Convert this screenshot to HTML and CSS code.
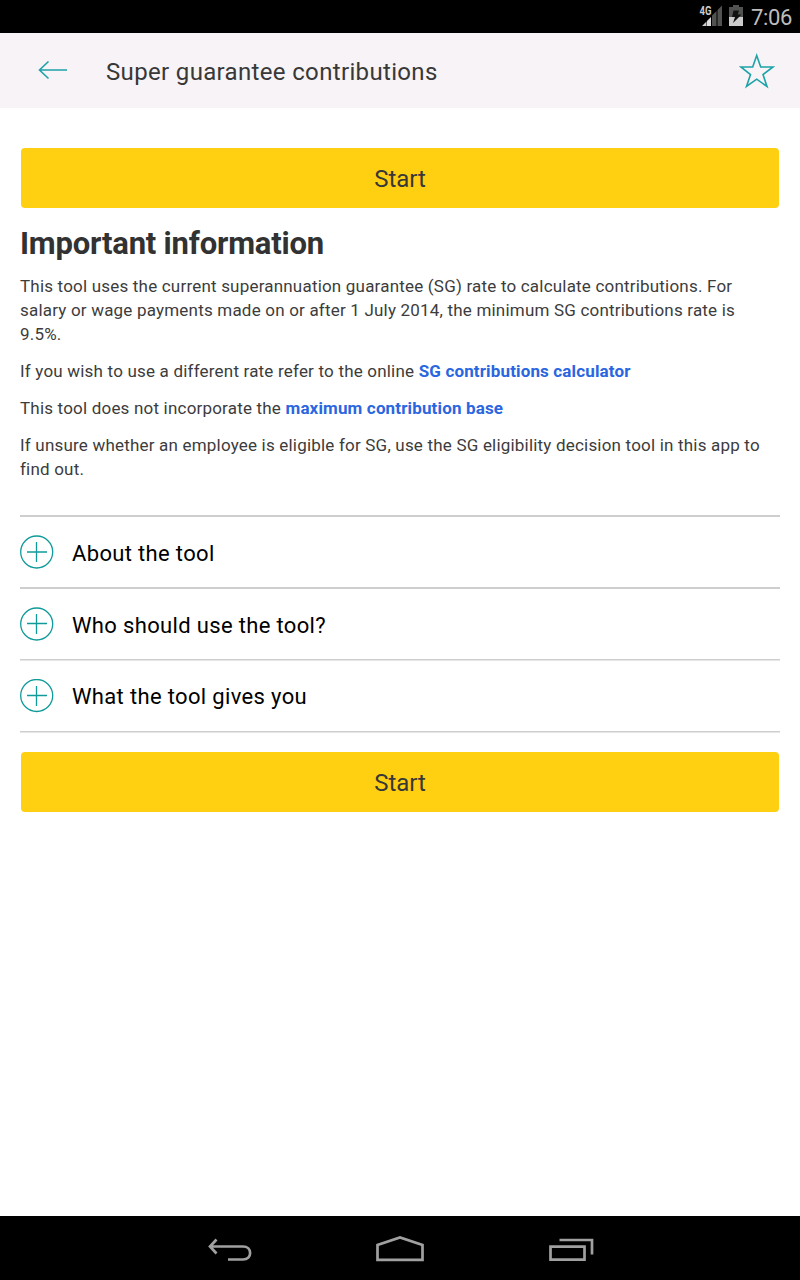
FILE: index.html
```html
<!DOCTYPE html>
<html lang="en">
<head>
<meta charset="utf-8">
<title>Super guarantee contributions</title>
<link rel="stylesheet" href="styles.css">
</head>
<body>
<div class="screen">
  <div class="status">
    <svg class="status-icons" width="50" height="33" viewBox="696 0 50 33">
      <path d="M702 26l4.500-4.500v4.500z" fill="#ccc"/><path d="M707 21l4-4v9h-4z" fill="#ddd"/>
      <path d="M712 15.500l4.500-4.500v15h-4.500zM717.500 10l4.500-4.500v20.500h-4.500z" fill="#505350"/>
      <text class="network" x="699.500" y="15" textLength="12" lengthAdjust="spacingAndGlyphs">4G</text>
      <path d="M733 5h6v2h4v10h-14V7h4z" fill="#505350"/><path d="M729 17h14v9h-14z" fill="#ccc"/>
      <path d="M733.500 10.500h5.500l-1.200 4h3.700l-8.500 8.500 2-6h-3z" fill="#111"/>
    </svg>
    <span class="clock">7:06</span>
  </div>
  <header class="appbar">
    <svg class="back" width="30" height="22" viewBox="38 59 30 22"><path d="M67 70H39.500M48.500 61.500L39.500 70L48.500 78.500"/></svg>
    <h1 class="title">Super guarantee contributions</h1>
    <svg class="star" width="36" height="36" viewBox="739 53 36 36"><path d="M756.700 55.500L760.700 67H773L763 74.500L767 86.500L756.700 79.200L746.500 86.500L750.500 74.500L740.800 67H752.700Z"/></svg>
  </header>
  <main class="content">
    <button class="start">Start</button>
    <h2 class="heading">Important information</h2>
    <p>This tool uses the current superannuation guarantee (SG) rate to calculate contributions. For<br>salary or wage payments made on or after 1 July 2014, the minimum SG contributions rate is<br>9.5%.</p>
    <p>If you wish to use a different rate refer to the online <a class="link">SG contributions calculator</a></p>
    <p>This tool does not incorporate the <a class="link">maximum contribution base</a></p>
    <p>If unsure whether an employee is eligible for SG, use the SG eligibility decision tool in this app to<br>find out.</p>
    <div class="accordion">
      <div class="item"><svg class="plus" width="34" height="34" viewBox="0 0 34 34"><path d="M7 17H27M16.500 7V27"/><circle cx="16.700" cy="17" r="16"/></svg><span>About the tool</span></div>
      <div class="item thin"><svg class="plus" width="34" height="34" viewBox="0 0 34 34"><path d="M7 16.500H27M16.500 7V27"/><circle cx="16.700" cy="17" r="16"/></svg><span>Who should use the tool?</span></div>
      <div class="item thin last"><svg class="plus" width="34" height="34" viewBox="0 0 34 34"><path d="M7 16.500H27M16.500 7V27"/><circle cx="16.700" cy="16.500" r="16"/></svg><span>What the tool gives you</span></div>
    </div>
    <button class="start">Start</button>
  </main>
  <nav class="navbar">
    <svg width="400" height="64" viewBox="200 1216 400 64">
      <path d="M211 1246.500H243C252.500 1246.500 252.500 1259.500 243 1259.500H228M216.500 1239.500L210 1246.500L216.500 1253.500"/>
      <path d="M377.500 1259.800V1245L400 1237.500L422.500 1245V1259.800Z"/>
      <path d="M550.500 1246.700H584.500V1259.700H550.500ZM559.500 1240H592V1254.500"/>
    </svg>
  </nav>
</div>
</body>
</html>
```
FILE: styles.css
```css
* { box-sizing: border-box; }
body { margin: 0; background: #fff; font-family: Roboto, "Liberation Sans", sans-serif; color: #323232; }
.screen { width: 800px; height: 1280px; display: flex; flex-direction: column; }
.status { height: 33px; background: #000; display: flex; align-items: center; justify-content: flex-end; padding-right: 8px; gap: 5px; }
.network { font: bold 12px Roboto, sans-serif; fill: #ccc; }
.clock { color: #bdbdbd; font-size: 22px; line-height: 33px; padding-top: 2px; letter-spacing: -0.35px; }
.appbar { height: 75px; background: #f7f3f7; display: flex; align-items: center; padding: 0 25px 0 38px; }
.appbar svg { fill: none; stroke: #1ca3a8; stroke-width: 1.6; }
.appbar .back { margin-top: -1px; }
.star { margin-left: auto; }
.title { margin: 3px 0 0 38px; font-size: 24px; font-weight: 400; letter-spacing: 0.34px; line-height: 30px; color: #383838; }
.content { flex: 1; padding: 40px 20px 0; }
.start { display: block; width: 758px; height: 60px; margin: 0 1px; padding: 2px 0 0; border: 0; border-radius: 4px; background: #ffcf12; font: 24px Roboto, sans-serif; color: #383838; }
.heading { margin: 16px 0 11px; font-size: 31px; font-weight: 700; line-height: 39px; letter-spacing: -0.2px; }
p { margin: 0 0 13px; font-size: 17px; line-height: 24px; letter-spacing: 0.195px; white-space: nowrap; color: #3c3c3c; }
.link { font-weight: 700; color: #2a66e0; letter-spacing: 0.15px; }
.accordion { margin: 34px 0 20px; border-top: 2px solid #cecece; }
.item { height: 72px; display: flex; align-items: center; gap: 18px; border-bottom: 2px solid #cecece; font-size: 22px; letter-spacing: 0.34px; color: #000; }
.item span { padding-top: 3px; }
.item.thin { height: 71px; border-bottom-width: 1px; box-shadow: 0 1px #e6e6e6; }
.item.last { height: 72px; }
.item.last span { padding-top: 1px; }
.plus { fill: none; stroke: #119a9a; stroke-width: 1.3; }
.navbar { height: 64px; background: #000; display: flex; justify-content: center; }
.navbar svg { fill: none; stroke: #a0a0a0; stroke-width: 2.7; }
```
